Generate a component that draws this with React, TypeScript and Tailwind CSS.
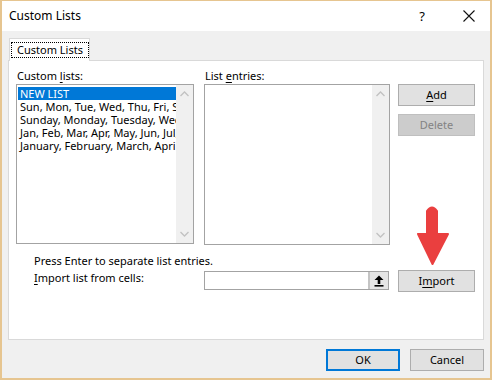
import React from "react";

const font = { fontFamily: '"Noto Sans", "Segoe UI", Arial, sans-serif' };

function Chevron({ up }: { up?: boolean }) {
  return (
    <svg width="9" height="6" viewBox="0 0 9 6">
      <path
        d={up ? "M0.5 5 L4.5 1 L8.5 5" : "M0.5 1 L4.5 5 L8.5 1"}
        fill="none"
        stroke="#c2c2c2"
        strokeWidth="1.3"
      />
    </svg>
  );
}

function ScrollBar() {
  return (
    <div className="w-[17px] h-full bg-[#f0f0f0] flex flex-col items-center justify-between py-[6px]">
      <Chevron up />
      <Chevron />
    </div>
  );
}

export default function App() {
  const items = [
    "Sun, Mon, Tue, Wed, Thu, Fri, Sat",
    "Sunday, Monday, Tuesday, Wednesday, Thursday",
    "Jan, Feb, Mar, Apr, May, Jun, Jul, Aug",
    "January, February, March, April, May",
  ];
  return (
    <div
      className="w-[492px] h-[380px] bg-[#f0f0f0] border-t border-x-2 border-b-2 border-[#e6c590] flex flex-col text-[11px] text-black relative overflow-hidden"
      style={font}
    >
      {/* Title bar */}
      <div className="h-[30px] bg-white flex items-center pl-[7px] shrink-0">
        <span className="text-[12px] leading-none">Custom Lists</span>
        <span className="ml-auto mr-[38px] text-[13px] leading-none">?</span>
        <svg width="12" height="12" viewBox="0 0 12 12" className="mr-[15px]">
          <path d="M0.5 0.5 L11.5 11.5 M11.5 0.5 L0.5 11.5" stroke="#111" strokeWidth="1.1" />
        </svg>
      </div>

      {/* Body */}
      <div className="flex flex-col px-[6px] pt-[7px]">
        {/* Tab */}
        <div className="flex">
          <div className="ml-[1px] w-[81px] h-[23px] bg-white border border-b-0 border-[#d9d9d9] relative z-10 -mb-px flex items-start pt-[3px] pl-[1px]">
            <span className="border border-dotted border-black px-[5px] h-[16px] leading-[14px] whitespace-nowrap">
              Custom Lists
            </span>
          </div>
        </div>

        {/* Panel */}
        <div className="h-[280px] bg-white border border-[#d9d9d9] pl-[7px] pt-[7px] flex flex-col">
          <div className="flex">
            {/* Custom lists */}
            <div className="w-[178px] flex flex-col">
              <div className="h-[16px] leading-[16px] pl-[1px]">
                Custom <span className="underline underline-offset-2">l</span>ists:
              </div>
              <div className="h-[160px] border border-[#a3a3a3] flex">
                <div className="flex-1 min-w-0 pt-[2px] pl-[1px] overflow-hidden">
                  <div className="h-[13px] leading-[13px] bg-[#0078d7] text-white pl-[2px] whitespace-nowrap">
                    NEW LIST
                  </div>
                  {items.map((t) => (
                    <div key={t} className="h-[13px] leading-[13px] pl-[2px] whitespace-nowrap">
                      {t}
                    </div>
                  ))}
                </div>
                <ScrollBar />
              </div>
            </div>

            {/* List entries */}
            <div className="w-[186px] ml-[10px] flex flex-col">
              <div className="h-[16px] leading-[16px] pl-[1px]">
                List <span className="underline underline-offset-2">e</span>ntries:
              </div>
              <div className="h-[161px] border border-[#a3a3a3] flex">
                <div className="flex-1" />
                <ScrollBar />
              </div>
            </div>

            {/* Buttons */}
            <div className="ml-[8px] pt-[16px] flex flex-col gap-[8px]">
              <div className="w-[77px] h-[22px] bg-[#e1e1e1] border border-[#adadad] flex items-center justify-center">
                <span>
                  <span className="underline underline-offset-2">A</span>dd
                </span>
              </div>
              <div className="w-[77px] h-[22px] bg-[#cccccc] border border-[#bfbfbf] flex items-center justify-center text-[#838383]">
                Delete
              </div>
            </div>
          </div>

          {/* Hint + import */}
          <div className="mt-[9px] pl-[18px] h-[14px] leading-[14px]">
            Press Enter to separate list entries.
          </div>
          <div className="flex items-start mt-[2px]">
            <div className="w-[170px] pl-[18px] leading-[14px] pt-[1px]">
              <span className="underline underline-offset-2">I</span>mport list from cells:
            </div>
            <div className="ml-[18px] mt-[1px] w-[185px] h-[19px] border border-[#a3a3a3] bg-white flex justify-end">
              <div className="w-[20px] h-full bg-[#e5e5e5] border-l-2 border-[#c4c4c4] flex items-center justify-center">
                <svg width="10" height="12" viewBox="0 0 10 12">
                  <path d="M5 0.5 L9.5 5 L6.3 5 L6.3 9 L3.7 9 L3.7 5 L0.5 5 Z" fill="#000" />
                  <rect x="0.5" y="10" width="9" height="1.6" fill="#000" />
                </svg>
              </div>
            </div>
            <div className="ml-[9px] w-[77px] h-[22px] bg-[#e1e1e1] border border-[#adadad] flex items-center justify-center">
              <span>
                I<span className="underline underline-offset-2">m</span>port
              </span>
            </div>
          </div>
        </div>

        {/* Footer buttons */}
        <div className="flex justify-end gap-[10px] mt-[9px]">
          <div className="w-[74px] h-[22px] bg-[#e1e1e1] border-2 border-[#0078d7] flex items-center justify-center">
            OK
          </div>
          <div className="w-[74px] h-[22px] bg-[#e1e1e1] border border-[#adadad] flex items-center justify-center">
            Cancel
          </div>
        </div>
      </div>

      {/* Red arrow annotation */}
      <svg
        className="absolute left-[414px] top-[204px]"
        width="34"
        height="62"
        viewBox="0 0 34 62"
      >
        <path
          d="M11 6 Q16 -1 21 6 L21 29 L32 29 L16.5 59 L2 29 L11 29 Z"
          fill="#ea3f3f"
          stroke="#ea3f3f"
          strokeLinejoin="round"
          strokeWidth="2"
        />
      </svg>
    </div>
  );
}
